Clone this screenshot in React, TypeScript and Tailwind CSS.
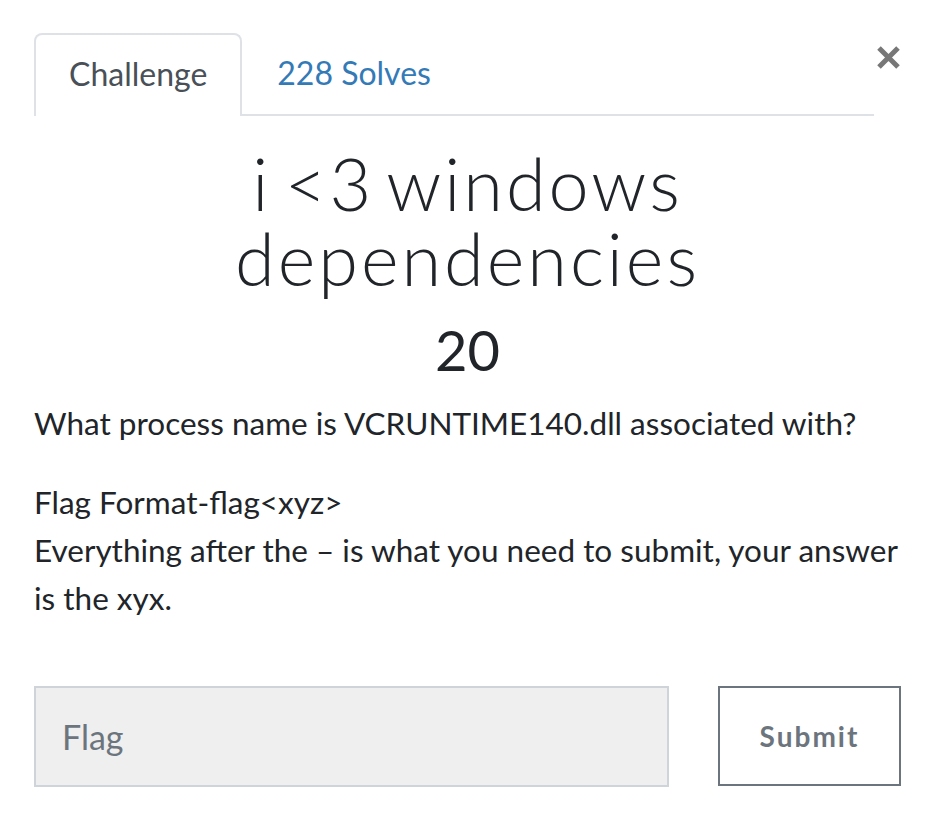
import React from "react";

const App: React.FC = () => {
  return (
    <div className="w-[936px] h-[828px] bg-white font-['Lato','Liberation_Sans',sans-serif] text-[#212529] pl-[34px] pr-[35px] pt-[33px]">
      {/* TABS + CLOSE */}
      <div className="flex items-start">
        <div className="flex-1 flex items-end border-b-2 border-[#dee2e6] h-[83px]">
          <div className="h-[83px] -mb-[2px] px-[33px] pb-[3px] border-2 border-b-0 border-[#dee2e6] rounded-t-[8px] bg-white flex items-center text-[32px] text-[#495057]">
            Challenge
          </div>
          <div className="h-[83px] px-[35px] flex items-center text-[32px] text-[#337ab7]">
            228 Solves
          </div>
        </div>
        <button className="w-[27px] h-[40px] mt-[13px] flex items-start justify-end">
          <svg width="25" height="23" viewBox="0 0 25 23">
            <path d="M3 2 L22 21 M22 2 L3 21" stroke="#777777" strokeWidth="5" strokeLinecap="butt" />
          </svg>
        </button>
      </div>

      {/* TITLE */}
      <div className="text-center mt-[30px]">
        <h2 className="text-[72px] leading-[75px] font-light tracking-[3px] text-[#212529]">
          <span className="[word-spacing:-9px]">i &lt;3 windows</span>
          <br />
          dependencies
        </h2>
        <h3 className="text-[56px] leading-[67px] mt-[20px] text-[#212529]">20</h3>
      </div>

      {/* DESCRIPTION */}
      <div className="mt-[16px] text-[31.5px] leading-[48px]">
        <p className="mb-[31px]">What process name is VCRUNTIME140.dll associated with?</p>
        <p>
          Flag Format-flag&lt;xyz&gt;
          <br />
          Everything after the – is what you need to submit, your answer is the xyx.
        </p>
      </div>

      {/* SUBMIT ROW */}
      <div className="flex items-start mt-[64px]">
        <input
          placeholder="Flag"
          className="w-[635px] h-[101px] bg-[#efefef] border-2 border-[#ced4da] px-[26px] text-[34px] placeholder:text-[#6c757d] outline-none"
        />
        <button className="ml-[49px] w-[183px] h-[100px] border-2 border-[#6c757d] text-[#6c757d] text-[28px] font-bold tracking-[2px]">
          Submit
        </button>
      </div>
    </div>
  );
};

export default App;
